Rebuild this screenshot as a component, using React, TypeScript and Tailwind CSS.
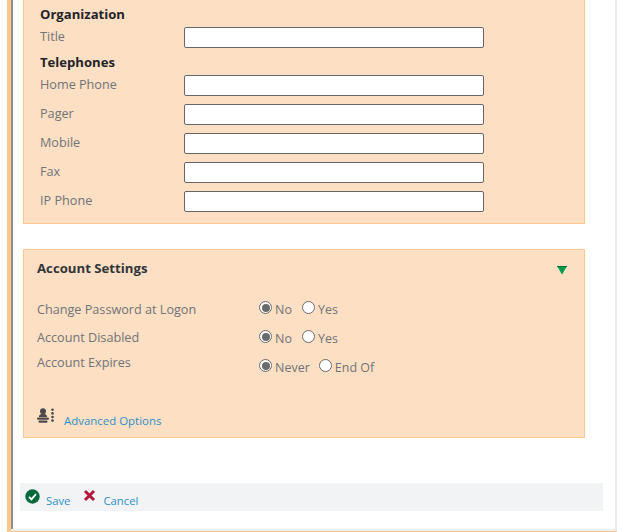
const FONT = "font-['Open_Sans',sans-serif]";

function PhoneRow({ label }: { label: string }) {
  return (
    <div className="flex h-[29px] items-start">
      <div className="w-[144px] text-[12.65px] leading-[20px] text-[#6f7479]">{label}</div>
      <input className="mt-[1px] h-[21px] w-[300px] rounded-[2px] border border-[#666] bg-white" />
    </div>
  );
}

function Radio({ checked, label, gap }: { checked?: boolean; label: string; gap?: string }) {
  return (
    <div className={`flex items-start ${gap ?? ""}`}>
      <span className="mr-[3px] mt-[2px] flex h-[13px] w-[13px] items-center justify-center rounded-full border border-[#6b6b6b] bg-white">
        {checked && <span className="h-[8px] w-[8px] rounded-full bg-[#6b6b6b]" />}
      </span>
      <span className="mt-[3px] leading-[16px] text-[#6f7479]">{label}</span>
    </div>
  );
}

export default function App() {
  return (
    <div className={`h-[532px] w-[623px] overflow-hidden bg-white pl-[7px] text-[12.5px] ${FONT}`}>
      <div className="h-[532px] w-[610px] border-b border-l-4 border-[#fbc790] bg-[#eee] pb-[2px]">
        <div className="h-[529px] border-l-2 border-r-2 border-[#8f8f8f] border-r-[#ececec] bg-white pl-[10px]">
          {/* Contact panel, scrolled so its top is cut off */}
          <div className="h-[224px] w-[562px] border border-t-0 border-[#fbc790] bg-[#fddfc3] pl-[16px] pt-[6px]">
            <div className="h-[17px] text-[13.1px] font-bold leading-[17px] text-[#1f2429]">Organization</div>
            <div className="mt-[3px] flex h-[24px] items-start">
              <div className="w-[144px] text-[12.65px] leading-[20px] text-[#6f7479]">Title</div>
              <input className="mt-[1px] h-[21px] w-[300px] rounded-[2px] border border-[#666] bg-white" />
            </div>
            <div className="mt-[4px] h-[20px] text-[13.1px] font-bold leading-[17px] text-[#1f2429]">Telephones</div>
            <PhoneRow label="Home Phone" />
            <PhoneRow label="Pager" />
            <PhoneRow label="Mobile" />
            <PhoneRow label="Fax" />
            <PhoneRow label="IP Phone" />
          </div>

          {/* Account settings */}
          <div className="mt-[25px] h-[189px] w-[562px] border border-[#fbc790] bg-[#fddfc3] pl-[13px] pr-[16px] pt-[9px]">
            <div className="flex h-[18px] items-center justify-between">
              <span className="text-[13.2px] font-bold leading-[18px] text-[#30353a]">Account Settings</span>
              <svg width="12" height="10" viewBox="0 0 12 10" className="mt-[4px]">
                <path d="M1 1h10L6 9.5z" fill="#009a4e" />
                <path d="M1 1h10v1H1z" fill="#046b3a" />
              </svg>
            </div>
            <div className="mt-[22px]">
              <div className="flex h-[28px]">
                <div className="w-[222px] text-[12.65px] leading-[20px] text-[#6f7479]">Change Password at Logon</div>
                <div className="flex h-[20px] items-start">
                  <Radio checked label="No" />
                  <Radio label="Yes" gap="ml-[10px]" />
                </div>
              </div>
              <div className="flex h-[25px]">
                <div className="w-[222px] text-[12.65px] leading-[20px] text-[#6f7479]">Account Disabled</div>
                <div className="mt-[1px] flex h-[20px] items-start">
                  <Radio checked label="No" />
                  <Radio label="Yes" gap="ml-[10px]" />
                </div>
              </div>
              <div className="flex h-[20px]">
                <div className="w-[222px] text-[12.65px] leading-[20px] text-[#6f7479]">Account Expires</div>
                <div className="mt-[5px] flex h-[20px] items-start">
                  <Radio checked label="Never" />
                  <Radio label="End Of" gap="ml-[9px]" />
                </div>
              </div>
            </div>
            <div className="mt-[35px] flex items-start">
              <svg width="19" height="17" viewBox="0 0 19 17" className="mt-[1px]">
                <circle cx="6" cy="3.2" r="3" fill="#4a4a4a" />
                <path d="M2 8.4c0-1.8 2-2.6 4-2.6s4 .8 4 2.6v.6H2z" fill="#4a4a4a" />
                <rect x="0" y="9.6" width="12" height="2.2" rx="1.1" fill="#4a4a4a" />
                <rect x="1.5" y="12.4" width="9" height="2.4" rx="1.2" fill="#4a4a4a" />
                <circle cx="15.5" cy="1.8" r="1.3" fill="#4a4a4a" />
                <circle cx="15.5" cy="5.4" r="1.3" fill="#4a4a4a" />
                <circle cx="15.5" cy="9" r="1.3" fill="#4a4a4a" />
                <circle cx="15.5" cy="12.6" r="1.3" fill="#4a4a4a" />
              </svg>
              <a className="ml-[8px] mt-[5px] text-[11.45px] leading-[18px] text-[#2e8fc9]">Advanced Options</a>
            </div>
          </div>

          {/* Footer actions */}
          <div className="-ml-[3px] mt-[45px] flex h-[28px] w-[583px] items-start bg-[#f2f3f5] pl-[5px]">
            <svg width="15" height="15" viewBox="0 0 15 15" className="mt-[6px]">
              <circle cx="7.5" cy="7.5" r="7.2" fill="#04693c" />
              <path d="M4 7.8l2.5 2.6L11 5" fill="none" stroke="#fff" strokeWidth="1.8" />
            </svg>
            <a className="ml-[6px] mt-[9px] text-[11.3px] leading-[18px] text-[#2e8fc9]">Save</a>
            <svg width="13" height="13" viewBox="0 0 13 13" className="ml-[13px] mt-[6px]">
              <path d="M2 2l9 9M11 2l-9 9" stroke="#b5173a" strokeWidth="3" />
            </svg>
            <a className="ml-[7px] mt-[9px] text-[11.3px] leading-[18px] text-[#2e8fc9]">Cancel</a>
          </div>
        </div>
      </div>
    </div>
  );
}
